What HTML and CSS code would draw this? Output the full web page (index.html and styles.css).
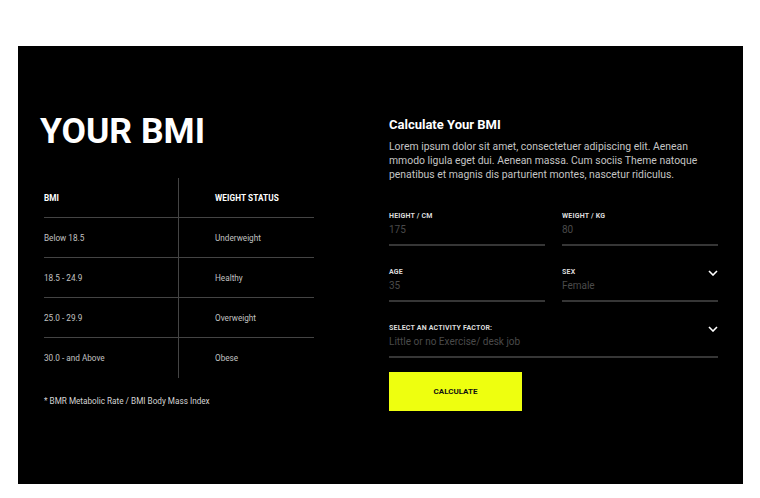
FILE: index.html
```html
<!DOCTYPE html>
<html lang="en">
<head>
<meta charset="utf-8">
<title>Your BMI</title>
<link rel="stylesheet" href="styles.css">
</head>
<body>
<section class="panel">
  <div class="left">
    <h1 class="title">YOUR BMI</h1>
    <div class="bmi-table">
      <div class="cell c1 head">BMI</div>
      <div class="cell c2 head">WEIGHT STATUS</div>
      <div class="cell c1">Below 18.5</div>
      <div class="cell c2">Underweight</div>
      <div class="cell c1">18.5 - 24.9</div>
      <div class="cell c2">Healthy</div>
      <div class="cell c1">25.0 - 29.9</div>
      <div class="cell c2">Overweight</div>
      <div class="cell c1 last">30.0 - and Above</div>
      <div class="cell c2 last">Obese</div>
    </div>
    <p class="note">* BMR Metabolic Rate / BMI Body Mass Index</p>
  </div>
  <div class="right">
    <h2 class="calc-title">Calculate Your BMI</h2>
    <p class="intro">Lorem ipsum dolor sit amet, consectetuer adipiscing elit. Aenean mmodo ligula eget dui. Aenean massa. Cum sociis Theme natoque penatibus et magnis dis parturient montes, nascetur ridiculus.</p>
    <form class="form">
      <div class="field">
        <span class="label">HEIGHT / CM</span>
        <span class="value">175</span>
      </div>
      <div class="field">
        <span class="label">WEIGHT / KG</span>
        <span class="value">80</span>
      </div>
      <div class="field">
        <span class="label">AGE</span>
        <span class="value">35</span>
      </div>
      <div class="field select">
        <span class="label">SEX</span>
        <span class="value">Female</span>
        <svg class="chev" width="10" height="6" viewBox="0 0 10 6"><path d="M1 1 L5 5 L9 1" fill="none" stroke="#fff" stroke-width="1.6"/></svg>
      </div>
      <div class="field select wide">
        <span class="label">SELECT AN ACTIVITY FACTOR:</span>
        <span class="value">Little or no Exercise/ desk job</span>
        <svg class="chev" width="10" height="6" viewBox="0 0 10 6"><path d="M1 1 L5 5 L9 1" fill="none" stroke="#fff" stroke-width="1.6"/></svg>
      </div>
    </form>
    <button class="btn" type="button">CALCULATE</button>
  </div>
</section>
</body>
</html>
```

FILE: styles.css
```css
* { box-sizing: border-box; }
html, body { margin: 0; padding: 0; background: #fff; }
body { font-family: Roboto, "Liberation Sans", Arial, sans-serif; }

.panel {
  margin: 46px 0 0 18px;
  width: 725px;
  height: 438px;
  background: #000;
  display: flex;
  align-items: flex-start;
  padding-left: 22px;
}

.left { width: 349px; padding-top: 67px; }
.title {
  margin: 0;
  color: #fff;
  font-size: 35.5px;
  line-height: 36px;
  font-weight: 700;
  letter-spacing: 0;
}

.bmi-table {
  margin: 29px 0 0 4px;
  width: 270px;
  display: grid;
  grid-template-columns: 135px 135px;
}
.cell {
  height: 40px;
  display: flex;
  align-items: center;
  font-size: 8.2px;
  color: #c2c2c2;
  border-bottom: 1px solid #444;
}
.cell.last { border-bottom: none; }
.c1 { border-right: 1px solid #444; }
.c2 { padding-left: 36px; }
.head { color: #fff; font-weight: 700; letter-spacing: 0.1px; }

.note {
  margin: 18px 0 0 4px;
  font-size: 8.2px;
  line-height: 10px;
  color: #d4d4d4;
}

.right { width: 329px; padding-top: 71px; }
.calc-title {
  margin: 0;
  color: #fff;
  font-size: 13px;
  line-height: 16px;
  font-weight: 700;
}
.intro {
  margin: 7px 0 0;
  font-size: 10.4px;
  line-height: 14px;
  color: #c4c4c4;
}

.form {
  margin-top: 29px;
  display: grid;
  grid-template-columns: 156px 156px;
  column-gap: 17px;
  row-gap: 21px;
}
.field {
  position: relative;
  display: flex;
  flex-direction: column;
  padding-bottom: 7px;
  border-bottom: 2px solid #363636;
}
.field.wide { grid-column: 1 / -1; }
.label {
  font-size: 7px;
  line-height: 10px;
  font-weight: 700;
  color: #dcdcdc;
  letter-spacing: 0.2px;
}
.value {
  margin-top: 2px;
  font-size: 10px;
  line-height: 14px;
  color: #4a4a4a;
}
.chev {
  position: absolute;
  right: 0;
  top: 3px;
}

.btn {
  margin-top: 14px;
  width: 133px;
  height: 39px;
  border: none;
  background: #eeff0f;
  color: #111;
  font-family: Roboto, "Liberation Sans", Arial, sans-serif;
  font-size: 8px;
  font-weight: 700;
  padding: 0;
  display: block;
}
```
